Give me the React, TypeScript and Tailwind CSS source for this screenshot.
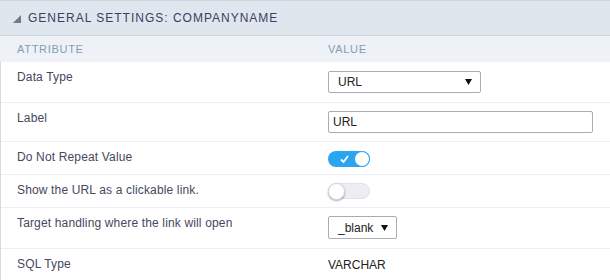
import React from "react"

const font = { fontFamily: '"Liberation Sans", Arial, sans-serif' }

function Select({ value, className }: { value: string; className: string }) {
  return (
    <div className={`flex items-center justify-between border border-[#a7adb7] rounded-[2px] bg-white pl-[9px] pr-[8px] text-[12px] text-[#222] ${className}`}>
      <span>{value}</span>
      <svg width="7" height="6" viewBox="0 0 7 6"><polygon points="0,0 7,0 3.5,6" fill="#111" /></svg>
    </div>
  )
}

function Toggle({ on }: { on: boolean }) {
  if (on) {
    return (
      <div className="relative w-[42px] h-[16px] rounded-full bg-[#2aa5ef]">
        <svg className="absolute left-[12px] top-[4px]" width="9" height="8" viewBox="0 0 9 8">
          <polyline points="1,4.5 3.5,7 8,1" fill="none" stroke="#fff" strokeWidth="1.8" />
        </svg>
        <div className="absolute right-0 top-0 w-[16px] h-[16px] rounded-full bg-white border border-[#2aa5ef]" />
      </div>
    )
  }
  return (
    <div className="relative w-[42px] h-[16px] rounded-full bg-[#eceef1] border border-[#dfe3e8]">
      <div className="absolute left-[-1px] top-[-1px] w-[17px] h-[17px] rounded-full bg-white border border-[#d6dade] shadow-[0_1px_2px_rgba(0,0,0,0.35)]" />
    </div>
  )
}

const rows: { label: string; h: string; pt: string; value: React.ReactNode }[] = [
  { label: "Data Type", h: "h-[41px]", pt: "pt-[9px]", value: <Select value="URL" className="w-[153px] h-[22px]" /> },
  {
    label: "Label",
    h: "h-[39px]",
    pt: "pt-[8px]",
    value: (
      <div className="w-[265px] h-[22px] border border-[#a7adb7] rounded-[2px] flex items-center pl-[4px] text-[12px] text-[#222]">URL</div>
    ),
  },
  { label: "Do Not Repeat Value", h: "h-[33px]", pt: "pt-[9px]", value: <Toggle on /> },
  { label: "Show the URL as a clickable link.", h: "h-[33px]", pt: "pt-[8px]", value: <Toggle on={false} /> },
  { label: "Target handling where the link will open", h: "h-[41px]", pt: "pt-[8px]", value: <Select value="_blank" className="w-[69px] h-[23px]" /> },
  { label: "SQL Type", h: "h-[33px]", pt: "pt-[9px]", value: <div className="text-[12px] leading-[14px] text-[#222]">VARCHAR</div> },
]

export default function App() {
  return (
    <div className="w-[610px] h-[280px] bg-white overflow-hidden" style={font}>
      <div className="h-[36px] bg-[#dfe6ee] border-t border-b border-t-[#ccd7df] border-b-[#cbd6de] flex items-center pl-[13px] gap-[7px]">
        <svg width="8" height="8" viewBox="0 0 8 8" className="mt-[1px]"><polygon points="8,0 8,8 0,8" fill="#737a86" /></svg>
        <span className="text-[12px] tracking-[1px] text-[#3b3f63]">GENERAL SETTINGS: COMPANYNAME</span>
      </div>
      <div className="h-[26px] bg-[#eef2f6] grid grid-cols-[312px_1fr] items-center text-[11px] tracking-[0.7px] text-[#7ba0b8]">
        <div className="pl-[17px]">ATTRIBUTE</div>
        <div className="pl-[16px]">VALUE</div>
      </div>
      <div className="border-l border-[#d3dce3]">
        {rows.map((r) => (
          <div key={r.label} className={`grid grid-cols-[311px_1fr] border-b border-[#eceef3] ${r.h}`}>
            <div className="pl-[16px] pt-[8px] text-[12px] leading-[14px] tracking-[0.15px] text-[#45485e]">{r.label}</div>
            <div className={`pl-[16px] ${r.pt}`}>{r.value}</div>
          </div>
        ))}
      </div>
    </div>
  )
}
